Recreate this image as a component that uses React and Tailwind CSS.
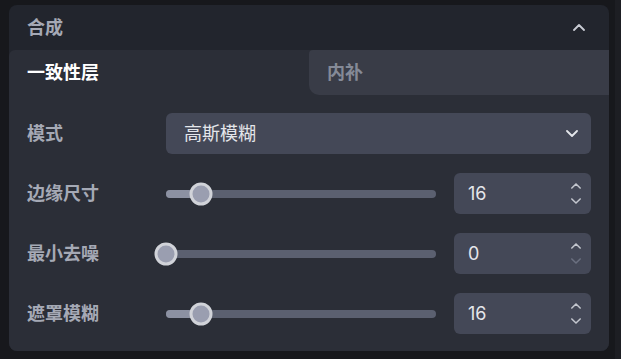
import React, { useState } from "react";

const FONT = { fontFamily: "Inter, 'Noto Sans CJK SC', sans-serif" };

const ChevronUp = ({ className }) => (
  <svg viewBox="0 0 12 7" className={className} fill="none" stroke="currentColor" strokeWidth="1.8" strokeLinecap="round" strokeLinejoin="round">
    <path d="M1 6 6 1l5 5" />
  </svg>
);

const ChevronDown = ({ className }) => (
  <svg viewBox="0 0 12 7" className={className} fill="none" stroke="currentColor" strokeWidth="1.8" strokeLinecap="round" strokeLinejoin="round">
    <path d="M1 1l5 5 5-5" />
  </svg>
);

const Slider = ({ value, max }) => {
  const pct = (value / max) * 100;
  return (
    <div className="relative h-[8px] flex-1 rounded-full bg-[#5b6070]">
      <div className="h-full rounded-full bg-[#8c91a2]" style={{ width: `${pct}%` }} />
      <div
        className="absolute top-1/2 h-[23px] w-[23px] -translate-x-1/2 -translate-y-1/2 rounded-full border-[3px] border-[#d1d3d9] bg-[#9a9eb0]"
        style={{ left: `${pct}%` }}
      />
    </div>
  );
};

const NumberBox = ({ value, min = 0 }) => (
  <div className="flex h-[41px] w-[137px] items-center justify-between rounded-md bg-[#444857] pl-[14px] pr-[10px]">
    <span className="text-[18px] text-[#e4e6eb]">{value}</span>
    <div className="flex flex-col gap-[9px]">
      <ChevronUp className="h-[6px] w-[10px] text-[#c3c6ce]" />
      <ChevronDown className={`h-[6px] w-[10px] ${value <= min ? "text-[#6b7080]" : "text-[#c3c6ce]"}`} />
    </div>
  </div>
);

const Row = ({ label, children }) => (
  <div className="flex h-[41px] items-center">
    <div className="w-[139px] text-[18px] font-bold text-[#a5a9b5]">{label}</div>
    <div className="flex flex-1 items-center">{children}</div>
  </div>
);

export default function App() {
  const [tab] = useState("consistency");
  const rows = [
    { label: "边缘尺寸", value: 16 },
    { label: "最小去噪", value: 0 },
    { label: "遮罩模糊", value: 16 },
  ];

  return (
    <div className="flex h-[359px] w-[621px] bg-[#17181c]" style={FONT}>
      <div className="ml-[9px] mt-[5px] flex h-[346px] w-[600px] flex-col overflow-hidden rounded-lg bg-[#22252d]">
        <div className="flex h-[45px] shrink-0 items-center justify-between pl-[18px] pr-[24px]">
          <span className="text-[18px] font-bold text-[#a5a9b5]">合成</span>
          <ChevronUp className="h-[7px] w-[12px] text-[#c9ccd4]" />
        </div>
        <div className="flex flex-1 flex-col rounded-t-md bg-[#2b2e37]">
          <div className="flex h-[45px] shrink-0">
            <div className="flex flex-1 items-center pl-[18px] text-[18px] font-bold text-white">
              {tab === "consistency" && "一致性层"}
            </div>
            <div className="flex flex-1 items-center rounded-bl-[10px] rounded-tl-sm bg-[#393c47] pl-[18px] text-[18px] font-bold text-[#858a97]">
              内补
            </div>
          </div>
          <div className="flex flex-col gap-[19px] px-[18px] pt-[18px]">
            <Row label="模式">
              <div className="flex h-[41px] flex-1 items-center justify-between rounded-md bg-[#444857] pl-[18px] pr-[13px]">
                <span className="text-[18px] text-[#e4e6eb]">高斯模糊</span>
                <ChevronDown className="h-[7px] w-[12px] text-[#e4e6eb]" />
              </div>
            </Row>
            {rows.map((r) => (
              <Row key={r.label} label={r.label}>
                <div className="flex flex-1 items-center gap-[18px]">
                  <Slider value={r.value} max={125} />
                  <NumberBox value={r.value} />
                </div>
              </Row>
            ))}
          </div>
        </div>
      </div>
      <div className="ml-[6px] h-full w-[6px] bg-[#1d1e23]" />
    </div>
  );
}
